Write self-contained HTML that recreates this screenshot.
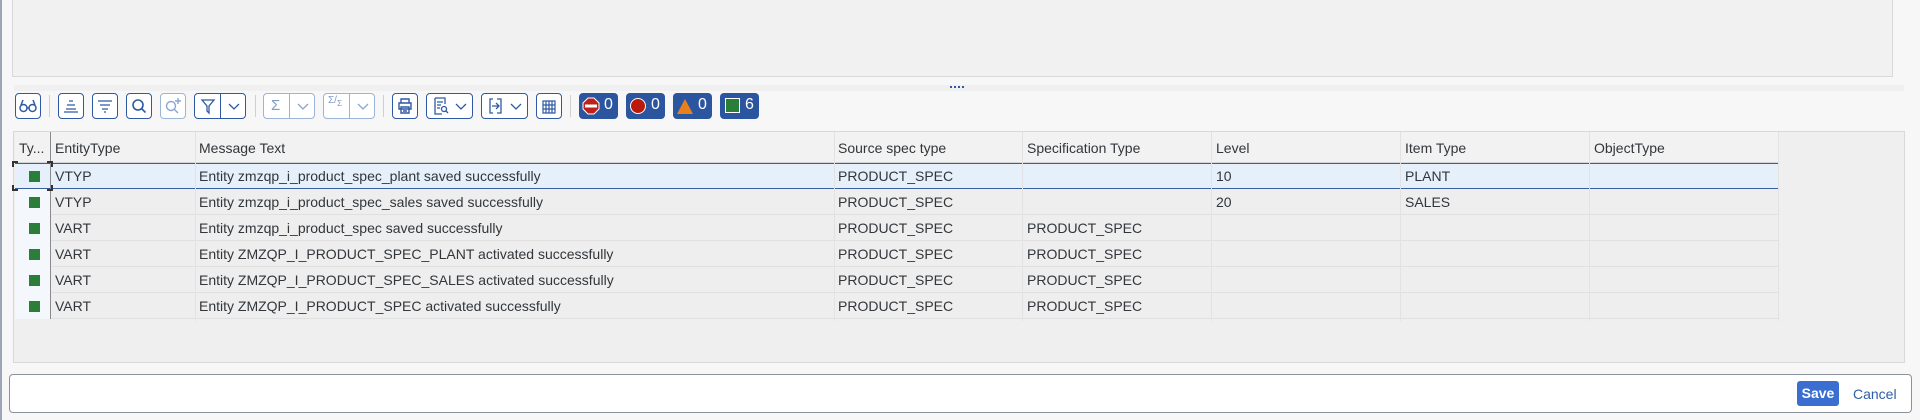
<!DOCTYPE html>
<html><head><meta charset="utf-8"><style>
*{box-sizing:border-box;margin:0;padding:0}
body{width:1920px;height:420px;background:#f7f7f7;font-family:"Liberation Sans",Arial,sans-serif;font-size:14px;color:#32363a;position:relative;overflow:hidden}
.a{position:absolute}
.btn{position:absolute;top:93px;height:26px;border:1px solid #2f5aa3;border-radius:4px;background:#fff}
.btn.l{border-color:#9bb4d8}
.sep{position:absolute;top:95px;width:1px;height:22px;background:#d0d0d0}
.msg{position:absolute;top:93px;height:26px;width:39px;background:#2c55a0;border-radius:4px;color:#fff;font-size:16px}
.msg span{position:absolute;left:25px;top:3px}
.col{position:absolute;top:132px;width:1px;background:#e2e2e2;height:189px}
.row{position:absolute;left:15px;width:1763px;height:26px;background:#eeeeee;border-bottom:1px solid #e0e0e0}
.sq{position:absolute;left:29px;width:11px;height:11px;background:#2b7d3a}
.k{position:absolute;width:6px;height:6px;border-color:#333;border-style:solid;border-width:0}
</style></head><body>
<div class="a" style="left:0;top:0;width:2px;height:420px;background:#9aa6b5"></div>
<div class="a" style="left:12px;top:-1px;width:1881px;height:78px;background:#f1f1f1;border:1px solid #d8d8d8"></div>
<div class="a" style="left:14px;top:85px;width:1890px;height:6px;background:#f0f0f0"></div>
<div class="a" style="left:950px;top:86px;width:14px;height:2px;border-top:2px dotted #2f5aa3"></div>

<!-- toolbar -->
<div class="btn" style="left:15px;width:26px"><svg width="24" height="24" viewBox="0 0 24 24" fill="none" stroke="#2f5aa3" stroke-width="1.5"><circle cx="7.5" cy="14" r="3.5"/><circle cx="16.5" cy="14" r="3.5"/><path d="M11 14h2M5 11l2-5M19 11l-2-5"/></svg></div>
<div class="sep" style="left:49px"></div>
<div class="btn" style="left:58px;width:26px"><svg width="24" height="24" viewBox="0 0 24 24" stroke="#2f5aa3" stroke-width="1.3"><path d="M10 7h4M8 11h8M7 15h10M5 18h14"/></svg></div>
<div class="btn" style="left:92px;width:26px"><svg width="24" height="24" viewBox="0 0 24 24" stroke="#2f5aa3" stroke-width="1.3"><path d="M5 7h14M7 11h10M9 15h6M11 18h2"/></svg></div>
<div class="btn" style="left:126px;width:26px"><svg width="24" height="24" viewBox="0 0 24 24" fill="none" stroke="#2f5aa3" stroke-width="1.6"><circle cx="11" cy="11" r="5"/><path d="M14.5 14.5l4 4"/></svg></div>
<div class="btn l" style="left:160px;width:26px"><svg width="24" height="24" viewBox="0 0 24 24" fill="none" stroke="#8aa6d0" stroke-width="1.4"><circle cx="10" cy="12" r="4.5"/><path d="M13 15l4 4M17 4v6M14 7h6"/></svg></div>
<div class="btn" style="left:194px;width:52px"><svg class="a" style="left:1px;top:0" width="24" height="24" viewBox="0 0 24 24" fill="none" stroke="#2f5aa3" stroke-width="1.3"><path d="M6 6h12l-5 6v7l-2-2v-5z"/></svg><div class="a" style="left:25px;top:0;width:1px;height:24px;background:#2f5aa3"></div><svg class="a" style="left:27px;top:0" width="24" height="24" viewBox="0 0 24 24" fill="none" stroke="#2f5aa3" stroke-width="1.3"><path d="M7 10l5 5 5-5"/></svg></div>
<div class="sep" style="left:255px"></div>
<div class="btn l" style="left:263px;width:52px"><span class="a" style="left:7px;top:3px;color:#7f9cc8;font-size:15px">Σ</span><div class="a" style="left:25px;top:0;width:1px;height:24px;background:#9bb4d8"></div><svg class="a" style="left:27px;top:0" width="24" height="24" viewBox="0 0 24 24" fill="none" stroke="#8aa6d0" stroke-width="1.3"><path d="M7 10l5 5 5-5"/></svg></div>
<div class="btn l" style="left:323px;width:52px"><span class="a" style="left:4px;top:1px;color:#7f9cc8;font-size:10px">Σ/<sub>Σ</sub></span><div class="a" style="left:25px;top:0;width:1px;height:24px;background:#9bb4d8"></div><svg class="a" style="left:27px;top:0" width="24" height="24" viewBox="0 0 24 24" fill="none" stroke="#8aa6d0" stroke-width="1.3"><path d="M7 10l5 5 5-5"/></svg></div>
<div class="sep" style="left:383px"></div>
<div class="btn" style="left:392px;width:26px"><svg width="24" height="24" viewBox="0 0 24 24" fill="none" stroke="#2f5aa3" stroke-width="1.4"><path d="M8 9V5h8v4M6 9h12v6H6zM8 13h8v6H8zM10 15h4M10 17h4"/></svg></div>
<div class="btn" style="left:426px;width:47px"><svg class="a" style="left:2px;top:0" width="24" height="24" viewBox="0 0 24 24" fill="none" stroke="#2f5aa3" stroke-width="1.3"><path d="M6 4h10v6M6 4v16h7M8 8h6M8 11h4M8 14h3"/><circle cx="15" cy="15" r="2.5"/><path d="M17 17l2 2"/></svg><svg class="a" style="left:22px;top:0" width="24" height="24" viewBox="0 0 24 24" fill="none" stroke="#2f5aa3" stroke-width="1.3"><path d="M7 10l5 5 5-5"/></svg></div>
<div class="btn" style="left:481px;width:47px"><svg class="a" style="left:2px;top:0" width="24" height="24" viewBox="0 0 24 24" fill="none" stroke="#2f5aa3" stroke-width="1.3"><path d="M9 5H6v14h3M13 5h4v14h-4M8 12h7M12 9l3 3-3 3"/></svg><svg class="a" style="left:22px;top:0" width="24" height="24" viewBox="0 0 24 24" fill="none" stroke="#2f5aa3" stroke-width="1.3"><path d="M7 10l5 5 5-5"/></svg></div>
<div class="btn" style="left:536px;width:26px"><svg width="24" height="24" viewBox="0 0 24 24" fill="none" stroke="#2f5aa3" stroke-width="1.2"><path d="M6 7h12v12H6zM6 11h12M6 15h12M9 7v12M12 7v12M15 7v12"/></svg></div>
<div class="sep" style="left:570px"></div>
<div class="msg" style="left:579px"><svg class="a" style="left:3px;top:4px" width="18" height="18" viewBox="0 0 18 18"><polygon points="6,1 12,1 17,6 17,12 12,17 6,17 1,12 1,6" fill="#c0201a" stroke="#fff" stroke-width="1"/><rect x="3" y="7.5" width="12" height="3" fill="#fff"/></svg><span>0</span></div>
<div class="msg" style="left:626px"><svg class="a" style="left:3px;top:4px" width="18" height="18"><circle cx="9" cy="9" r="7.5" fill="#bb1a0a" stroke="#fff" stroke-width="1"/></svg><span>0</span></div>
<div class="msg" style="left:673px"><svg class="a" style="left:3px;top:4px" width="18" height="18"><polygon points="9,2 17,17 1,17" fill="#e8801c"/></svg><span>0</span></div>
<div class="msg" style="left:720px"><div class="a" style="left:5px;top:5px;width:15px;height:15px;background:#2b7d3a;border:1px solid #fff"></div><span>6</span></div>

<!-- table -->
<div class="a" style="left:13px;top:131px;width:1892px;height:232px;background:#efefef;border:1px solid #d8d8d8"></div>
<div class="a" style="left:15px;top:132px;width:1763px;height:31px;background:#f2f2f2;border-bottom:1px solid #d4d4d4"></div>
<div class="a" style="left:19px;top:140px">Ty...</div>
<div class="a" style="left:55px;top:140px">EntityType</div>
<div class="a" style="left:199px;top:140px">Message Text</div>
<div class="a" style="left:838px;top:140px">Source spec type</div>
<div class="a" style="left:1027px;top:140px">Specification Type</div>
<div class="a" style="left:1216px;top:140px">Level</div>
<div class="a" style="left:1405px;top:140px">Item Type</div>
<div class="a" style="left:1594px;top:140px">ObjectType</div>

<div class="row" style="top:163px;background:#e5f0fa;border-top:1px solid #3a5fa0;border-bottom:1px solid #3a5fa0"></div>
<div class="row" style="top:189px"></div>
<div class="row" style="top:215px"></div>
<div class="row" style="top:241px"></div>
<div class="row" style="top:267px"></div>
<div class="row" style="top:293px"></div>
<div class="a" style="left:15px;top:189px;width:35px;height:130px;background:#f4f8fc"></div>

<div class="col" style="left:50px;background:#8a8a8a;top:132px;height:187px"></div>
<div class="col" style="left:195px"></div><div class="col" style="left:834px"></div><div class="col" style="left:1022px"></div><div class="col" style="left:1211px"></div><div class="col" style="left:1400px"></div><div class="col" style="left:1589px"></div><div class="col" style="left:1778px"></div>

<div class="sq" style="top:171px"></div><div class="sq" style="top:197px"></div><div class="sq" style="top:223px"></div><div class="sq" style="top:249px"></div><div class="sq" style="top:275px"></div><div class="sq" style="top:301px"></div>
<div class="k" style="left:12px;top:161px;border-top-width:2px;border-left-width:2px"></div>
<div class="k" style="left:47px;top:161px;border-top-width:2px;border-right-width:2px"></div>
<div class="k" style="left:12px;top:185px;border-bottom-width:2px;border-left-width:2px"></div>
<div class="k" style="left:47px;top:185px;border-bottom-width:2px;border-right-width:2px"></div>

<div class="a" style="top:168px;left:55px">VTYP</div><div class="a" style="top:168px;left:199px">Entity zmzqp_i_product_spec_plant saved successfully</div><div class="a" style="top:168px;left:838px">PRODUCT_SPEC</div><div class="a" style="top:168px;left:1216px">10</div><div class="a" style="top:168px;left:1405px">PLANT</div>
<div class="a" style="top:194px;left:55px">VTYP</div><div class="a" style="top:194px;left:199px">Entity zmzqp_i_product_spec_sales saved successfully</div><div class="a" style="top:194px;left:838px">PRODUCT_SPEC</div><div class="a" style="top:194px;left:1216px">20</div><div class="a" style="top:194px;left:1405px">SALES</div>
<div class="a" style="top:220px;left:55px">VART</div><div class="a" style="top:220px;left:199px">Entity zmzqp_i_product_spec saved successfully</div><div class="a" style="top:220px;left:838px">PRODUCT_SPEC</div><div class="a" style="top:220px;left:1027px">PRODUCT_SPEC</div>
<div class="a" style="top:246px;left:55px">VART</div><div class="a" style="top:246px;left:199px">Entity ZMZQP_I_PRODUCT_SPEC_PLANT activated successfully</div><div class="a" style="top:246px;left:838px">PRODUCT_SPEC</div><div class="a" style="top:246px;left:1027px">PRODUCT_SPEC</div>
<div class="a" style="top:272px;left:55px">VART</div><div class="a" style="top:272px;left:199px">Entity ZMZQP_I_PRODUCT_SPEC_SALES activated successfully</div><div class="a" style="top:272px;left:838px">PRODUCT_SPEC</div><div class="a" style="top:272px;left:1027px">PRODUCT_SPEC</div>
<div class="a" style="top:298px;left:55px">VART</div><div class="a" style="top:298px;left:199px">Entity ZMZQP_I_PRODUCT_SPEC activated successfully</div><div class="a" style="top:298px;left:838px">PRODUCT_SPEC</div><div class="a" style="top:298px;left:1027px">PRODUCT_SPEC</div>

<!-- footer -->
<div class="a" style="left:9px;top:374px;width:1903px;height:39px;background:#fff;border:1px solid #8a939c;border-radius:4px"></div>
<div class="a" style="left:1797px;top:381px;width:42px;height:25px;background:#3a6fd1;border-radius:3px;color:#fff;font-weight:bold;text-align:center;line-height:25px;font-size:14px">Save</div>
<div class="a" style="left:1853px;top:386px;color:#2e5ea7">Cancel</div>
</body></html>
